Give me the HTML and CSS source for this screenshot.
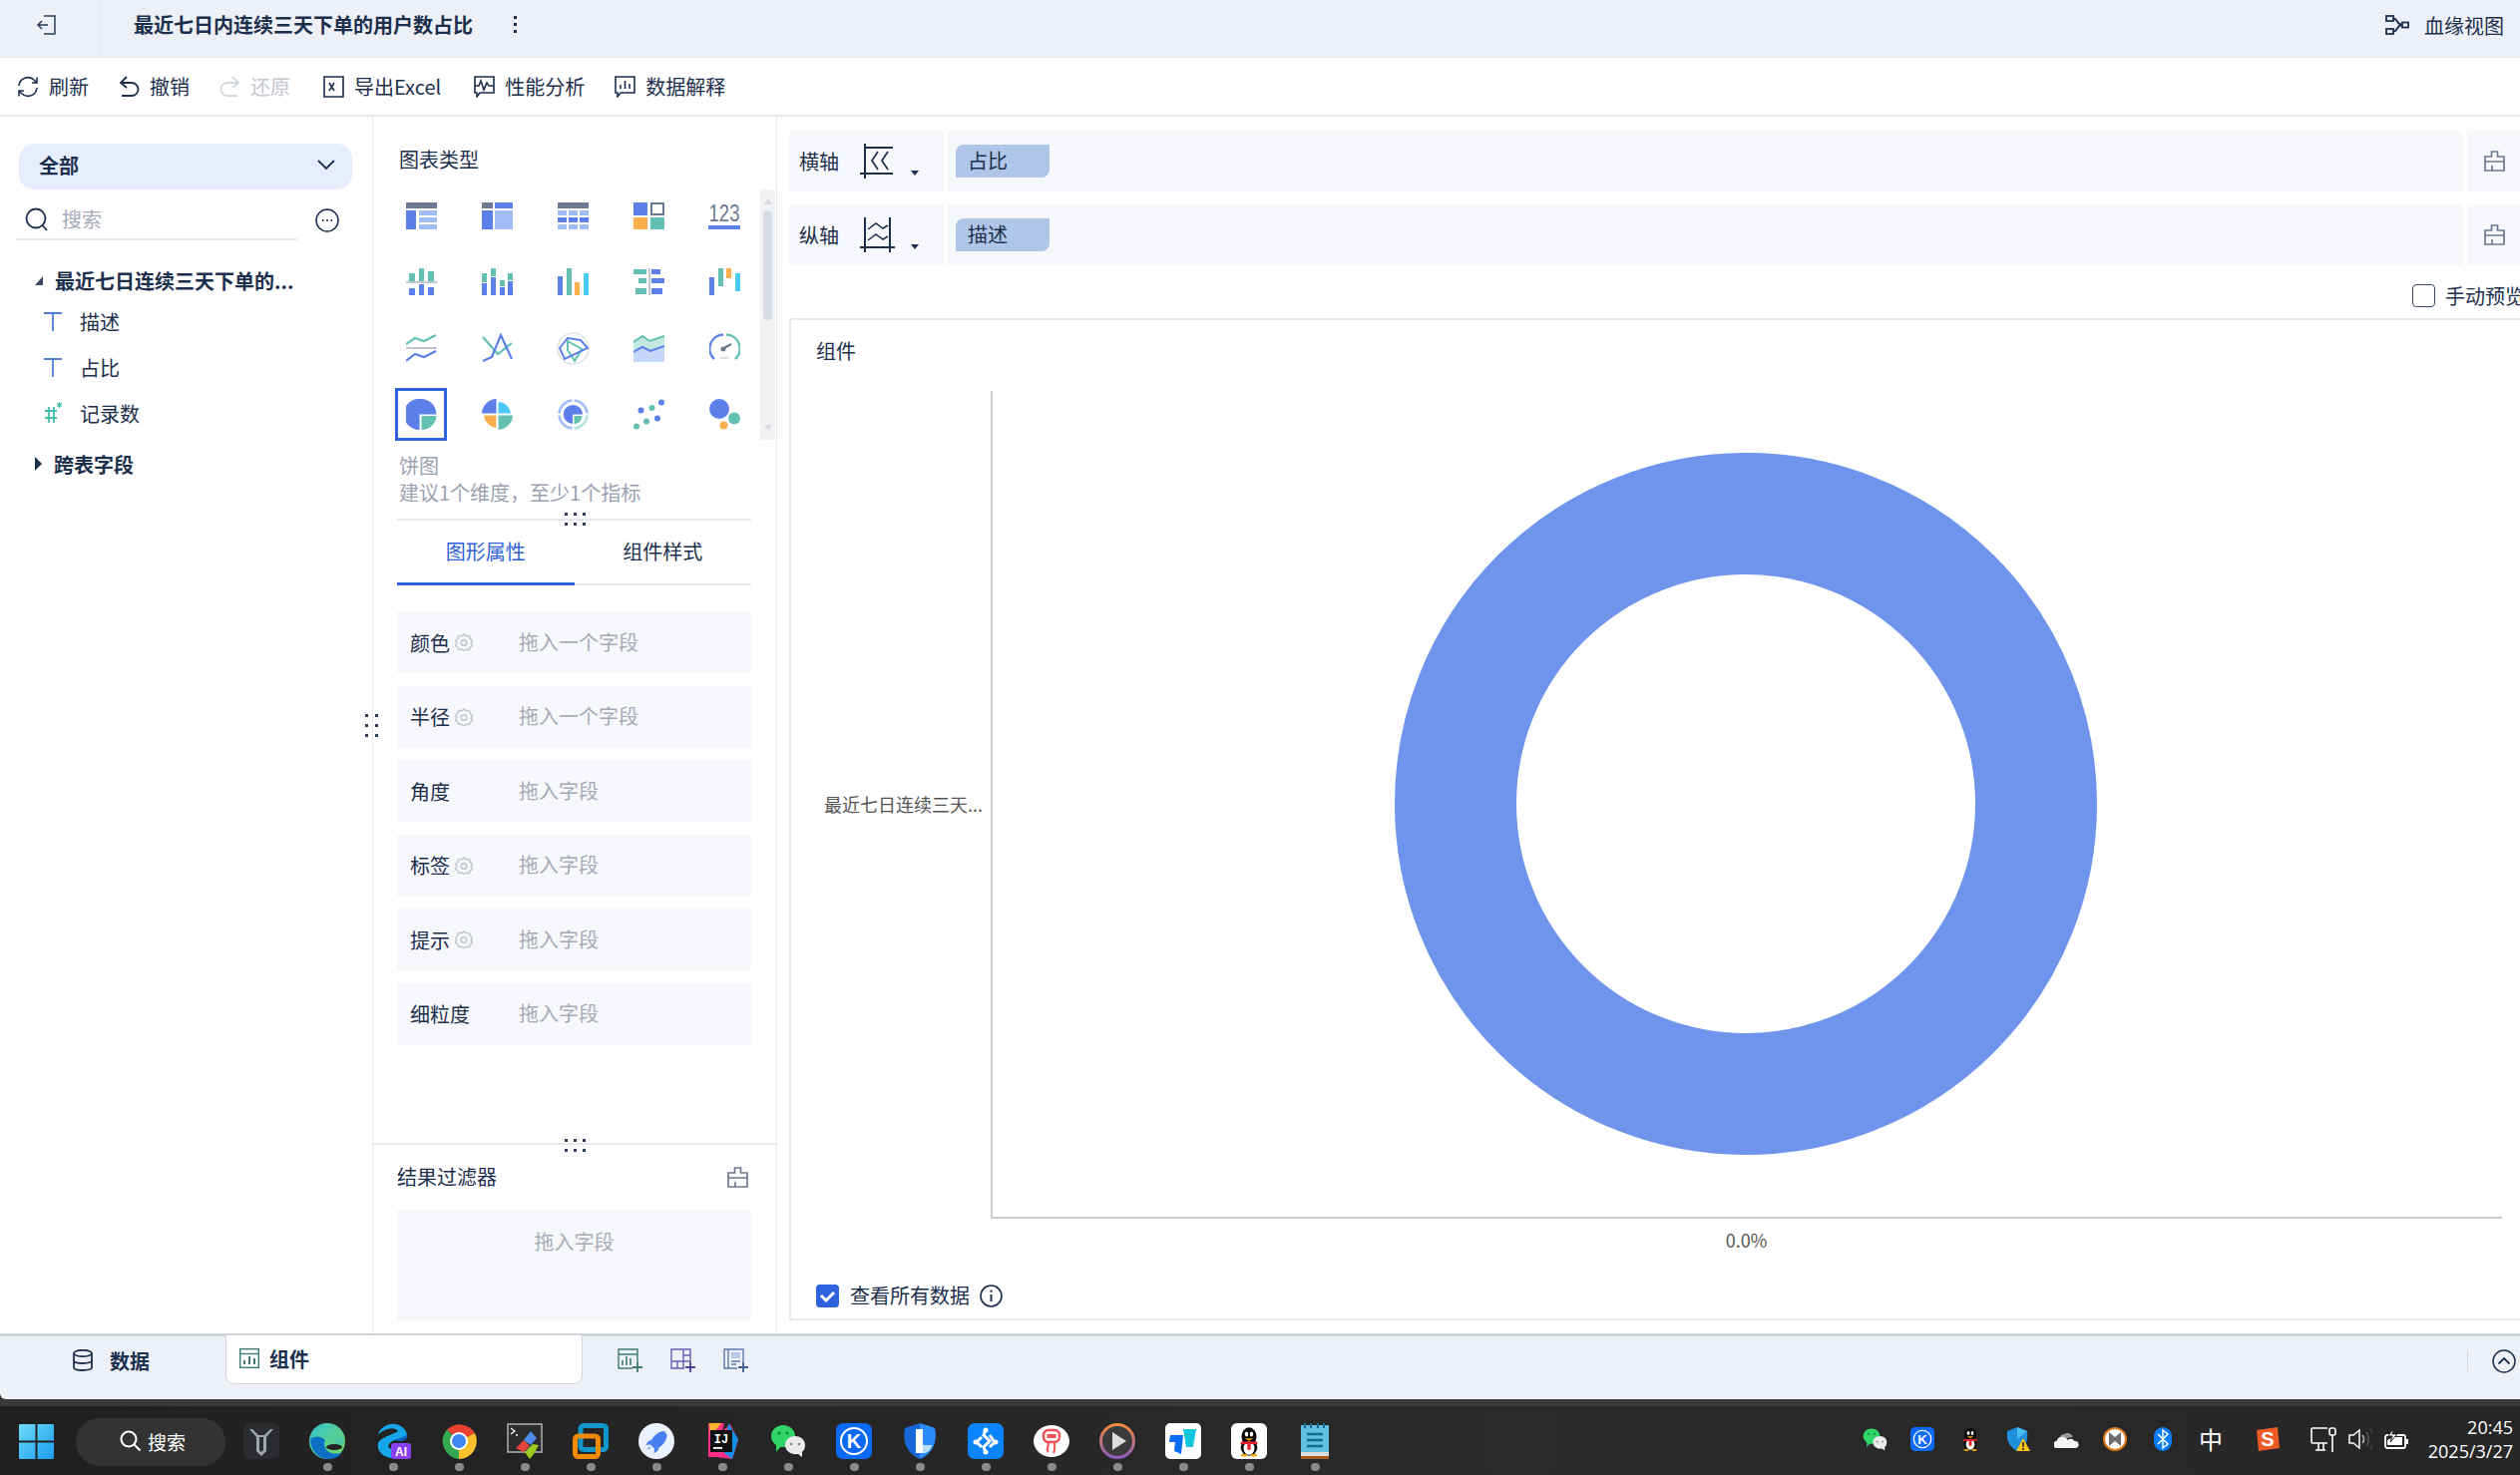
FILE: index.html
```html
<!DOCTYPE html>
<html lang="zh-CN">

<head>
    <meta charset="UTF-8">
    <title>最近七日内连续三天下单的用户数占比</title>
    <link rel="stylesheet" href="styles.css">
</head>

<body>

    <svg class="defs" aria-hidden="true">
        <defs>
            <symbol id="brush" viewBox="0 0 21 21">
                <path d="M7.5 6V1h6v5h6.5v14H1V6zM1 11h19M8 20v-5" fill="none" stroke="#6c7a90" stroke-width="1.7"/>
            </symbol>
            <symbol id="gear" viewBox="0 0 18 18">
                <path d="M9 1l2.500 1.800 3-.2.900 2.900 2.100 2.100-1.300 2.400 1.300 2.400-2.100 1.600-.9 2.400-3-.2L9 17.800l-2.500-1.800-3 .2-.9-2.400-2.100-1.600 1.300-2.400L.5 7.600l2.100-2.100.9-2.900 3 .2z" fill="none" stroke="#c3c9d4" stroke-width="1.600"/>
                <circle cx="9" cy="9.400" r="2.800" fill="none" stroke="#c3c9d4" stroke-width="1.600"/>
            </symbol>
            <symbol id="wechat" viewBox="0 0 36 36">
                <path d="M13 2c7 0 12 5 12 11s-5 11-12 11l-3 0-4 5 0-7C3 20 1 17 1 13 1 7 6 2 13 2z" fill="#2fd667"/>
                <circle cx="9" cy="10" r="1.600" fill="#148a3f"/>
                <circle cx="17" cy="10" r="1.600" fill="#148a3f"/>
                <path d="M25 13c6 0 10 4 10 9 0 3-1 5-3 7l0 5-4-3c-7 1-13-3-13-9 0-5 4-9 10-9z" fill="#eceaea"/>
                <circle cx="21" cy="21" r="1.300" fill="#888"/>
                <circle cx="29" cy="21" r="1.300" fill="#888"/>
            </symbol>
            <symbol id="kapp" viewBox="0 0 36 36">
                <rect width="36" height="36" rx="7" fill="#0a69f5"/>
                <circle cx="18" cy="18" r="13" fill="none" stroke="#fff" stroke-width="2"/>
                <text x="18" y="25" text-anchor="middle" class="icon-letter" font-size="20" fill="#fff">K</text>
            </symbol>
            <symbol id="penguin" viewBox="0 0 36 36">
                <ellipse cx="18" cy="12" rx="9" ry="11" fill="#0b0b0b"/>
                <ellipse cx="18" cy="25" rx="10" ry="10" fill="#0b0b0b"/>
                <ellipse cx="18" cy="26" rx="6.500" ry="8" fill="#fff"/>
                <ellipse cx="15" cy="9" rx="2" ry="3" fill="#fff"/>
                <ellipse cx="21" cy="9" rx="2" ry="3" fill="#fff"/>
                <path d="M13 14h10l-5 3z" fill="#f5a800"/>
                <path d="M8 18h20v3H20v7h-4v-7H8z" fill="#e3222a"/>
                <ellipse cx="12" cy="34.500" rx="4" ry="1.500" fill="#f5a800"/>
                <ellipse cx="24" cy="34.500" rx="4" ry="1.500" fill="#f5a800"/>
            </symbol>
        </defs>
    </svg>

    <!-- title bar -->
    <header class="topbar">
        <div class="back-btn">
            <svg width="20" height="20" viewBox="0 0 20 20" fill="none" stroke="#2b3d58" stroke-width="1.500">
                <path d="M7 1h11v18H7M1 10h10M5 6l-4 4 4 4"/>
            </svg>
        </div>
        <div class="page-title">最近七日内连续三天下单的用户数占比</div>
        <div class="kebab"><i></i><i></i><i></i></div>
        <div class="lineage">
            <svg width="24" height="20" viewBox="0 0 24 20" fill="none" stroke="#1c2f4d" stroke-width="1.800">
                <rect x="1" y="1" width="7" height="5"/>
                <rect x="1" y="14" width="7" height="5"/>
                <rect x="17" y="7.500" width="6" height="5"/>
                <path d="M8 3.500c5 0 3 6.500 9 6.500M8 16.500c5 0 3-6.500 9-6.500"/>
            </svg>
            <span>血缘视图</span>
        </div>
    </header>

    <!-- tool buttons -->
    <nav class="toolbar">
        <div class="tool tool-refresh">
            <svg width="22" height="22" viewBox="0 0 22 22" fill="none" stroke="#1c2f4d" stroke-width="1.600">
                <path d="M2 10a9 9 0 0 1 15.500-5.500L20 7M20 1.500V7h-5M20 12a9 9 0 0 1-15.500 5.500L2 15M2 20.500V15h5"/>
            </svg>
            <span>刷新</span>
        </div>
        <div class="tool tool-undo">
            <svg width="21" height="22" viewBox="0 0 21 22" fill="none" stroke="#1c2f4d" stroke-width="1.800">
                <path d="M8 1L2 7l6 5M2 7h11a6.500 6.500 0 0 1 0 13H3"/>
            </svg>
            <span>撤销</span>
        </div>
        <div class="tool tool-redo is-off">
            <svg width="21" height="22" viewBox="0 0 21 22" fill="none" stroke="#d4d8df" stroke-width="1.800">
                <path d="M13 1l6 6-6 5M19 7H8a6.500 6.500 0 0 0 0 13h10"/>
            </svg>
            <span>还原</span>
        </div>
        <div class="tool tool-excel">
            <svg width="21" height="22" viewBox="0 0 21 22" fill="none" stroke="#1c2f4d" stroke-width="1.600">
                <path d="M15 1H1v20h14M15 1h5v20h-5"/>
                <path d="M6 7l5 8M11 7l-5 8"/>
            </svg>
            <span>导出Excel</span>
        </div>
        <div class="tool tool-perf">
            <svg width="21" height="22" viewBox="0 0 21 22" fill="none" stroke="#1c2f4d" stroke-width="1.600">
                <path d="M1 1h19v16H6l-3 4v-4H1z"/>
                <path d="M1 10h4l2-5 3 9 3-7 2 3h5"/>
            </svg>
            <span>性能分析</span>
        </div>
        <div class="tool tool-explain">
            <svg width="21" height="22" viewBox="0 0 21 22" fill="none" stroke="#1c2f4d" stroke-width="1.600">
                <path d="M1 1h19v16H6l-3 4v-4H1z"/>
                <path d="M6 9v4M10.500 5v8M15 8v5"/>
            </svg>
            <span>数据解释</span>
        </div>
    </nav>

    <main class="main">

        <!-- data fields -->
        <aside class="data-panel">
            <div class="scope-select">
                <span>全部</span>
                <svg width="18" height="11" viewBox="0 0 18 11" fill="none" stroke="#1c2f4d" stroke-width="1.800">
                    <path d="M1 1l8 8 8-8"/>
                </svg>
            </div>
            <div class="search-row">
                <div class="search-box">
                    <svg width="24" height="24" viewBox="0 0 24 24" fill="none" stroke="#1c2f4d" stroke-width="1.800">
                        <circle cx="11" cy="11" r="9.500"/>
                        <path d="M17.500 18l4.500 5"/>
                    </svg>
                    <span>搜索</span>
                </div>
                <svg width="24" height="24" viewBox="0 0 24 24" fill="none" stroke="#1c2f4d" stroke-width="1.500">
                    <circle cx="12" cy="12" r="11"/>
                    <path d="M7 12h1.500M11.300 12h1.500M15.500 12h1.500" stroke-width="2"/>
                </svg>
            </div>
            <div class="tree">
                <div class="tree-group">
                    <i class="caret-open"></i>
                    <span>最近七日连续三天下单的...</span>
                </div>
                <div class="tree-field first">
                    <svg width="18" height="20" viewBox="0 0 18 20" fill="none" stroke="#4d7fd6" stroke-width="1.800"><path d="M0 2h18M9 2v18"/></svg>
                    <span>描述</span>
                </div>
                <div class="tree-field">
                    <svg width="18" height="20" viewBox="0 0 18 20" fill="none" stroke="#4d7fd6" stroke-width="1.800"><path d="M0 2h18M9 2v18"/></svg>
                    <span>占比</span>
                </div>
                <div class="tree-field">
                    <svg width="18" height="22" viewBox="0 0 18 22" fill="none" stroke="#47bfae" stroke-width="1.800"><path d="M1 9h12M1 16h12M5 5v16M10 5v16"/><path d="M15.500 0v6M13 1.500l5 3M18 1.500l-5 3" stroke-width="1.200"/></svg>
                    <span>记录数</span>
                </div>
                <div class="tree-group second">
                    <i class="caret-closed"></i>
                    <span>跨表字段</span>
                </div>
            </div>
        </aside>

        <!-- chart settings -->
        <section class="setting-panel">
            <div class="type-block">
                <div class="block-title">图表类型</div>
                <div class="type-wrap">
                    <div class="type-grid">
                        <div class="type-cell"><svg width="31" height="28" viewBox="0 0 31 28"><rect width="31" height="6" fill="#6b7a90"/><rect y="8" width="10" height="19" fill="#5b80ea"/><rect x="13" y="8" width="18" height="5" fill="#a0bdf5"/><rect x="13" y="15" width="18" height="5" fill="#a0bdf5"/><rect x="13" y="22" width="18" height="5" fill="#a0bdf5"/></svg></div>
                        <div class="type-cell"><svg width="31" height="28" viewBox="0 0 31 28"><rect width="11" height="6" fill="#6b7a90"/><rect x="13" width="18" height="6" fill="#5b80ea"/><rect y="8" width="11" height="19" fill="#5b80ea"/><rect x="13" y="8" width="18" height="19" fill="#a0bdf5"/></svg></div>
                        <div class="type-cell"><svg width="31" height="28" viewBox="0 0 31 28"><rect width="31" height="6" fill="#6b7a90"/><path d="M0 8h9v5H0zM11 8h9v5h-9zM22 8h9v5h-9zM0 22h9v5H0zM11 22h9v5h-9zM22 22h9v5h-9z" fill="#a0bdf5"/><path d="M0 15h9v5H0zM11 15h9v5h-9zM22 15h9v5h-9z" fill="#5b80ea"/></svg></div>
                        <div class="type-cell"><svg width="31" height="28" viewBox="0 0 31 28"><rect width="14" height="13" fill="#5b80ea"/><rect x="18" y="1" width="12" height="11" fill="none" stroke="#6b7a90" stroke-width="2"/><rect y="15" width="14" height="12" fill="#fbb04d"/><rect x="17" y="15" width="14" height="12" fill="#64c0b3"/></svg></div>
                        <div class="type-cell"><svg class="num-icon" width="32" height="28" viewBox="0 0 32 28"><g transform="scale(1 1.25)"><text x="16" y="15" text-anchor="middle" class="icon-num">123</text></g><rect y="23" width="32" height="4" fill="#5b80ea"/></svg></div>

                        <div class="type-cell"><svg width="31" height="28" viewBox="0 0 31 28"><path d="M3 5h6v8H3zM13 0h5v13h-5zM22 3h6v10h-6z" fill="#64c0b3"/><rect y="13" width="31" height="2" fill="#c3c9d4"/><path d="M3 20h6v7H3zM13 16h5v11h-5zM22 19h6v8h-6z" fill="#5b80ea"/></svg></div>
                        <div class="type-cell"><svg width="31" height="28" viewBox="0 0 31 28"><path d="M0 5h5v9H0zM9 0h5v8H9zM18 12h5v6h-5zM26 5h5v7h-5z" fill="#64c0b3"/><path d="M0 15h5v12H0zM9 9h5v18H9zM18 19h5v8h-5zM26 13h5v14h-5z" fill="#5b80ea"/></svg></div>
                        <div class="type-cell"><svg width="31" height="28" viewBox="0 0 31 28"><rect y="8" width="5" height="19" fill="#5b80ea"/><rect x="9" width="5" height="27" fill="#64c0b3"/><rect x="17" y="14" width="5" height="13" fill="#fbb04d"/><rect x="26" y="5" width="5" height="22" fill="#4cc9f7"/></svg></div>
                        <div class="type-cell"><svg width="31" height="28" viewBox="0 0 31 28"><path d="M0 1h13v5H0zM5 10h8v5H5zM2 20h11v6H2z" fill="#64c0b3"/><rect x="15" width="2" height="27" fill="#c3c9d4"/><path d="M18 1h9v5h-9zM18 10h13v5H18zM18 20h11v6H18z" fill="#5b80ea"/></svg></div>
                        <div class="type-cell"><svg width="31" height="28" viewBox="0 0 31 28"><rect y="9" width="5" height="18" fill="#5b80ea"/><rect x="9" width="5" height="18" fill="#64c0b3"/><rect x="17" width="5" height="10" fill="#fbb04d"/><rect x="26" y="5" width="5" height="18" fill="#4cc9f7"/></svg></div>

                        <div class="type-cell"><svg width="31" height="28" viewBox="0 0 31 28" fill="none" stroke-width="2.200"><path d="M0 10l9-6 9 3 12-6" stroke="#64c0b3"/><rect y="13" width="31" height="2" fill="#c3c9d4" stroke="none"/><path d="M0 27l9-7 9 3 12-6" stroke="#5b80ea"/></svg></div>
                        <div class="type-cell"><svg width="31" height="30" viewBox="0 0 31 30" fill="none" stroke-width="2.200"><path d="M1 4l15 17 14-11" stroke="#64c0b3"/><path d="M1 28l9-4 9-22 11 24" stroke="#5b80ea"/></svg></div>
                        <div class="type-cell"><svg width="33" height="33" viewBox="0 0 33 33" fill="none"><circle cx="16.500" cy="16.500" r="15.500" stroke="#dde1e8" stroke-width="1.500"/><path d="M11 9l14 8-7 12-7-11z" stroke="#64c0b3" stroke-width="2"/><path d="M3 16l8-10 13 2 7 8-23 11z" stroke="#5b80ea" stroke-width="2"/></svg></div>
                        <div class="type-cell"><svg width="31" height="28" viewBox="0 0 31 28"><path d="M0 8l9-6 7 5 15-5v22H0z" fill="#c4e8e2"/><path d="M0 18l9-5 8 4 14-5v16H0z" fill="#c6d6f8"/><path d="M0 8l9-6 7 5 15-5" fill="none" stroke="#64c0b3" stroke-width="2"/><path d="M0 18l9-5 8 4 14-5" fill="none" stroke="#5b80ea" stroke-width="2"/></svg></div>
                        <div class="type-cell"><svg width="31" height="31" viewBox="0 0 31 31" fill="none" stroke-width="2.500"><path d="M5 26A14 14 0 0 1 14 1.600" stroke="#5b80ea"/><path d="M17 1.600A14 14 0 0 1 26 26" stroke="#64c0b3"/><path d="M11 25h9" stroke="#dde1e8"/><path d="M13 16l9-5" stroke="#6b7a90"/><circle cx="14" cy="16" r="2.500" fill="#6b7a90" stroke="none"/></svg></div>

                        <div class="type-cell is-active"><svg width="31" height="31" viewBox="0 0 31 31"><path d="M15.500 0A15.500 15.500 0 1 0 14 30.900V15.500h16.900A15.500 15.500 0 0 0 15.500 0z" fill="#5b80ea"/><path d="M16 17h15A15 15 0 0 1 16 31z" fill="#64c0b3"/></svg></div>
                        <div class="type-cell"><svg width="31" height="31" viewBox="0 0 31 31"><path d="M14.500 0A15 15 0 0 0 0 14.500h14.500z" fill="#5b80ea"/><path d="M16.500 3A13 13 0 0 1 29 14.500H16.500z" fill="#4cc9f7"/><path d="M14.500 16.500H2A14 14 0 0 0 14.500 29z" fill="#fbb04d"/><path d="M16.500 16.500H31A15 15 0 0 1 16.500 31z" fill="#64c0b3"/></svg></div>
                        <div class="type-cell"><svg width="31" height="31" viewBox="0 0 31 31" fill="none"><path d="M14.500 1.500A14 14 0 0 0 1.500 14.500M1.500 16.500A14 14 0 0 0 14.500 29.500" stroke="#a0bdf5" stroke-width="2.500"/><path d="M16.500 1.500A14 14 0 0 1 29.500 14.500" stroke="#a0bdf5" stroke-width="2.500"/><path d="M16.500 29.500A14 14 0 0 0 29.500 16.500" stroke="#b8e3dc" stroke-width="2.500"/><path d="M15.500 6A9.500 9.500 0 1 0 15 25V15.500h10A9.500 9.500 0 0 0 15.500 6z" fill="#5b80ea"/><path d="M16.500 17h8A8 8 0 0 1 16.500 25z" fill="#64c0b3"/></svg></div>
                        <div class="type-cell"><svg width="31" height="31" viewBox="0 0 31 31"><circle cx="7.500" cy="11.500" r="3" fill="#5b80ea"/><circle cx="18.500" cy="9" r="3" fill="#64c0b3"/><circle cx="28" cy="3.500" r="3" fill="#5b80ea"/><circle cx="3" cy="27.500" r="3" fill="#64c0b3"/><circle cx="13" cy="22.500" r="3" fill="#64c0b3"/><circle cx="24" cy="19.500" r="3" fill="#5b80ea"/></svg></div>
                        <div class="type-cell"><svg width="31" height="31" viewBox="0 0 31 31"><circle cx="10" cy="10" r="10" fill="#5b80ea"/><circle cx="25" cy="19.500" r="6" fill="#64c0b3"/><circle cx="14.500" cy="26.500" r="4" fill="#fbb04d"/></svg></div>
                    </div>
                    <div class="scroll-track">
                        <i class="arrow-up"></i>
                        <div class="scroll-thumb"></div>
                        <i class="arrow-down"></i>
                    </div>
                </div>
                <div class="type-hint">
                    <div>饼图</div>
                    <div>建议1个维度，至少1个指标</div>
                </div>
            </div>

            <div class="attr-block">
                <div class="grip-h"><i></i><i></i><i></i><i></i><i></i><i></i></div>
                <div class="tabs">
                    <div class="tab is-active">图形属性</div>
                    <div class="tab">组件样式</div>
                </div>
                <div class="attr-list">
                    <div class="attr-row">
                        <div class="attr-name">颜色<svg width="18" height="18"><use href="#gear"/></svg></div>
                        <div class="attr-drop">拖入一个字段</div>
                    </div>
                    <div class="attr-row">
                        <div class="attr-name">半径<svg width="18" height="18"><use href="#gear"/></svg></div>
                        <div class="attr-drop">拖入一个字段</div>
                    </div>
                    <div class="attr-row">
                        <div class="attr-name">角度</div>
                        <div class="attr-drop">拖入字段</div>
                    </div>
                    <div class="attr-row">
                        <div class="attr-name">标签<svg width="18" height="18"><use href="#gear"/></svg></div>
                        <div class="attr-drop">拖入字段</div>
                    </div>
                    <div class="attr-row">
                        <div class="attr-name">提示<svg width="18" height="18"><use href="#gear"/></svg></div>
                        <div class="attr-drop">拖入字段</div>
                    </div>
                    <div class="attr-row">
                        <div class="attr-name">细粒度</div>
                        <div class="attr-drop">拖入字段</div>
                    </div>
                </div>
            </div>

            <div class="filter-block">
                <div class="grip-h"><i></i><i></i><i></i><i></i><i></i><i></i></div>
                <div class="filter-head">
                    <span>结果过滤器</span>
                    <svg width="21" height="21"><use href="#brush"/></svg>
                </div>
                <div class="filter-drop">拖入字段</div>
            </div>
            <div class="grip-v"><i></i><i></i><i></i><i></i><i></i><i></i></div>
        </section>

        <!-- chart canvas -->
        <section class="chart-panel">
            <div class="axis-row">
                <div class="axis-label">
                    <span>横轴</span>
                    <svg width="35" height="35" viewBox="0 0 35 35" fill="none" stroke="#1c2f4d" stroke-width="2">
                        <path d="M0 30h33M5 0v35M5 4h28"/>
                        <path d="M18 8l-6 9 6 9M28 8l-6 9 6 9" stroke-width="1.700"/>
                    </svg>
                    <i class="caret-down"></i>
                </div>
                <div class="axis-drop"><div class="pill">占比</div></div>
                <div class="axis-end"><svg width="21" height="21"><use href="#brush"/></svg></div>
            </div>
            <div class="axis-row">
                <div class="axis-label">
                    <span>纵轴</span>
                    <svg width="35" height="35" viewBox="0 0 35 35" fill="none" stroke="#1c2f4d" stroke-width="2">
                        <path d="M0 30h35M5 0v35M30 0v35"/>
                        <path d="M8 12l8-6 7 5 5-3M8 23l8-6 7 5 5-3" stroke-width="1.500"/>
                    </svg>
                    <i class="caret-down"></i>
                </div>
                <div class="axis-drop"><div class="pill">描述</div></div>
                <div class="axis-end"><svg width="21" height="21"><use href="#brush"/></svg></div>
            </div>
            <div class="preview-row">
                <i class="check-empty"></i>
                <span>手动预览</span>
            </div>
            <div class="chart-card">
                <div class="card-title">组件</div>
                <div class="plot-row">
                    <div class="y-label">最近七日连续三天...</div>
                    <div class="plot">
                        <svg width="704" height="704" viewBox="0 0 704 704">
                            <circle cx="352" cy="352" r="291" fill="none" stroke="#6f94ec" stroke-width="122"/>
                        </svg>
                    </div>
                </div>
                <div class="x-label">0.0%</div>
                <div class="all-data">
                    <i class="check-on">
                        <svg width="23" height="23" viewBox="0 0 23 23" fill="none" stroke="#fff" stroke-width="3"><path d="M5 11l5 5 8-8"/></svg>
                    </i>
                    <span>查看所有数据</span>
                    <svg width="23" height="23" viewBox="0 0 23 23" fill="none" stroke="#1c2f4d" stroke-width="1.600">
                        <circle cx="11.500" cy="11.500" r="10.500"/>
                        <path d="M11.500 10v7" stroke-width="2"/>
                        <path d="M11.500 5.500v2.200" stroke-width="2"/>
                    </svg>
                </div>
            </div>
        </section>
    </main>

    <!-- sheet tabs -->
    <div class="sheetbar">
        <div class="sheet-data">
            <svg width="20" height="22" viewBox="0 0 20 22" fill="none" stroke="#1c2f4d" stroke-width="1.800">
                <ellipse cx="10" cy="4" rx="9" ry="3.200"/>
                <path d="M1 4v14c0 2 4 3 9 3s9-1 9-3V4M1 11c0 2 4 3 9 3s9-1 9-3"/>
            </svg>
            <span>数据</span>
        </div>
        <div class="sheet-tab">
            <svg width="20" height="20" viewBox="0 0 20 20" fill="none" stroke="#3e7a78" stroke-width="1.400">
                <rect x=".7" y=".7" width="18.600" height="18.600"/>
                <path d="M1 5.500h18"/>
                <path d="M5 16v-4M10 16V8M15 16v-6" stroke-width="2"/>
            </svg>
            <span>组件</span>
        </div>
        <div class="sheet-add">
            <svg width="25" height="25" viewBox="0 0 25 25" fill="none" stroke="#3e7a78" stroke-width="1.400">
                <path d="M15 20H1V1h19v14M1 6h19"/>
                <path d="M5 17v-5M9 17V8M13 17v-7" stroke-width="1.600"/>
                <path d="M20 14v10M15 19h10" stroke-width="1.800"/>
            </svg>
            <svg width="25" height="25" viewBox="0 0 25 25" fill="none" stroke="#6a5cb0" stroke-width="1.400">
                <path d="M14 20H1V1h19v13M13 1v19M13 7h7M13 13h7M1 13h12M7 13v7"/>
                <path d="M20 14v10M15 19h10" stroke="#4a3f9c" stroke-width="1.800"/>
            </svg>
            <svg width="25" height="25" viewBox="0 0 25 25" fill="none" stroke="#5d7ab0" stroke-width="1.400">
                <path d="M14 20H1V1h19v13M5 1v19"/>
                <rect x="8" y="4" width="9" height="6" fill="#b7c8e8" stroke="none"/>
                <path d="M8 13h9M8 16h5"/>
                <path d="M20 14v10M15 19h10" stroke="#3f5f9c" stroke-width="1.800"/>
            </svg>
        </div>
        <div class="sheet-end">
            <i class="sheet-sep"></i>
            <svg width="24" height="24" viewBox="0 0 24 24" fill="none" stroke="#1c2f4d" stroke-width="1.500">
                <circle cx="12" cy="12" r="11"/>
                <path d="M6.500 14.500L12 9l5.500 5.500" stroke-width="1.800"/>
            </svg>
        </div>
    </div>

    <!-- windows taskbar -->
    <footer class="taskbar">
        <svg class="win-logo" width="35" height="35" viewBox="0 0 35 35">
            <defs>
                <linearGradient id="winblue" x1="0" y1="0" x2="1" y2="1">
                    <stop offset="0" stop-color="#6fdcf7"/>
                    <stop offset="1" stop-color="#1a9bf0"/>
                </linearGradient>
            </defs>
            <path d="M1 0h15.500v16.500H0V1zM18.500 0H34l1 1v15.500H18.500zM0 18.500h16.500V35H1l-1-1zM18.500 18.500H35V34l-1 1H18.500z" fill="url(#winblue)"/>
        </svg>
        <div class="win-search">
            <svg width="22" height="22" viewBox="0 0 22 22" fill="none" stroke="#fff" stroke-width="2">
                <circle cx="9" cy="9" r="7.500"/>
                <path d="M14.500 14.500l6 6"/>
            </svg>
            <span>搜索</span>
        </div>
        <div class="apps">
            <div class="app no-dot">
                <svg width="36" height="36" viewBox="0 0 36 36"><rect width="36" height="36" rx="7" fill="#2a2c30"/><path d="M6 6l7 8v14l5 5 5-5V14l7-8-3 0-6 6h-6L9 6z" fill="#a2a6aa"/><path d="M16 14h4v13l-2 2-2-2z" fill="#2a2c2f"/></svg>
            </div>
            <div class="app">
                <svg width="36" height="36" viewBox="0 0 36 36"><defs><linearGradient id="edgeg" x1="0" y1="0" x2="1" y2="1"><stop offset="0" stop-color="#2fc2d5"/><stop offset="1" stop-color="#7ed95a"/></linearGradient></defs><circle cx="18" cy="18" r="18" fill="url(#edgeg)"/><path d="M1 17C2 28 9 36 19 36c6 0 11-2 14-7-4 2-9 2-13 0-5-3-6-8-4-12-4-4-11-5-15 0z" fill="#0c6fc4"/><path d="M16 17c2-3 7-3 9 0 1 2 1 4 0 5h9c1-3 1-6 0-8H17z" fill="#4fc9a4"/><ellipse cx="25" cy="24" rx="8" ry="3" fill="#242424"/></svg>
            </div>
            <div class="app">
                <svg width="36" height="36" viewBox="0 0 36 36"><path d="M3 12C5 4 13 0 20 1c7 1 12 6 12 12l-12 4C14 19 12 23 14 25l6 3v7C9 36 1 28 3 20c1-3 6-6 14-9 5-2 7-3 5-4C17 4 8 6 3 12z" fill="#16a7ea"/><path d="M20 17l12-5c1 4-5 8-12 5z" fill="#0b63c8"/><rect x="16" y="20" width="20" height="16" rx="3" fill="#8a3ff0"/><text x="26" y="33" text-anchor="middle" class="icon-letter" font-size="12" fill="#fff">AI</text></svg>
            </div>
            <div class="app">
                <svg width="36" height="36" viewBox="0 0 36 36"><path d="M18 18L6 6.500A18 18 0 0 1 34 10z" fill="#e8412f"/><path d="M18 18L34 10A18 18 0 0 1 18 36z" fill="#fbc02d"/><path d="M18 18L18 36A18 18 0 0 1 6 6.500z" fill="#35a853"/><circle cx="18" cy="18" r="9" fill="#fff"/><circle cx="18" cy="18" r="7" fill="#3f86f0"/></svg>
            </div>
            <div class="app">
                <svg width="36" height="36" viewBox="0 0 36 36"><rect x="1" y="1" width="34" height="28" fill="#2b2b2b" stroke="#a9a9a9" stroke-width="1.600"/><path d="M4 5l4 3-4 3M9 12h2" fill="none" stroke="#fff" stroke-width="1.300"/><path d="M9 25l8-8 6 6-6 6z" fill="#e2453a"/><path d="M17 17l7-9 6 7-6 7z" fill="#4d8ae6"/><path d="M18 29l8-8 6 1-5 9-4 5z" fill="#9ccc20"/></svg>
            </div>
            <div class="app">
                <svg width="36" height="36" viewBox="0 0 36 36" fill="none" stroke-width="5"><rect x="8" y="2.500" width="25.500" height="24" rx="3" stroke="#0f95c9"/><rect x="2.500" y="13" width="23" height="20.500" rx="3" stroke="#f08a00"/></svg>
            </div>
            <div class="app">
                <svg width="36" height="36" viewBox="0 0 36 36"><circle cx="18" cy="18" r="18" fill="#ecf2fd"/><path d="M26 8c-6 0-10 4-13 9l-3 1-3 4 5-.5 4 4-.5 5 4-3 1-3c5-3 8-8 8-13z" fill="#4a7ff2"/><path d="M8 27l3-4 2 2z" fill="#8fb2f8"/></svg>
            </div>
            <div class="app">
                <svg width="36" height="36" viewBox="0 0 36 36"><path d="M4 0h16l-2 8 8-7 8 16-6 19-16-2H4z" fill="#fb2f86"/><path d="M24 0l10 16-6 20-8-6z" fill="#0f8fe6"/><path d="M5 0h12L6 14z" fill="#fcb52e"/><rect x="6" y="7" width="22" height="22" fill="#111"/><text x="17" y="20" text-anchor="middle" class="icon-mono" font-size="12" fill="#fff">IJ</text><rect x="9" y="24" width="9" height="1.800" fill="#fff"/></svg>
            </div>
            <div class="app"><svg width="36" height="36"><use href="#wechat"/></svg></div>
            <div class="app"><svg width="36" height="36"><use href="#kapp"/></svg></div>
            <div class="app">
                <svg width="36" height="36" viewBox="0 0 36 36"><path d="M18 0l15 5c2 12 0 24-15 31C3 29 1 17 3 5z" fill="#1767d8"/><path d="M18 0l15 5c2 12 0 24-15 31z" fill="#2c8dfa"/><path d="M14 6h7v16h9c-1 5-5 8-9 8h-7z" fill="#fff"/><path d="M21 22h9c-1 5-5 8-9 8z" fill="#b9dcff"/></svg>
            </div>
            <div class="app">
                <svg width="36" height="36" viewBox="0 0 36 36"><rect width="36" height="36" rx="7" fill="#0a84ff"/><g fill="none" stroke="#fff" stroke-width="3"><path d="M18 6l-2 6 6 6-6 6 2 6M14 14l-5 5 5 5M22 12l5 7-5 5"/></g><circle cx="18" cy="7" r="2.500" fill="#fff"/><circle cx="18" cy="29" r="2.500" fill="#fff"/><circle cx="8" cy="19" r="2.500" fill="#fff"/><circle cx="28" cy="19" r="2.500" fill="#fff"/></svg>
            </div>
            <div class="app">
                <svg width="36" height="36" viewBox="0 0 36 36"><ellipse cx="18" cy="18" rx="18" ry="16" fill="#fff"/><rect x="10" y="7" width="16" height="12" rx="5" fill="none" stroke="#ef4f55" stroke-width="2.500"/><rect x="13.500" y="11" width="9" height="4" fill="#ef4f55"/><path d="M15 19c0 6-3 8 0 10M21 19c0 5 1 7-1 11" fill="none" stroke="#ef4f55" stroke-width="2"/></svg>
            </div>
            <div class="app">
                <svg width="36" height="36" viewBox="0 0 36 36"><defs><linearGradient id="playg" x1="0" y1="0" x2="0" y2="1"><stop offset="0" stop-color="#f08a3c"/><stop offset="1" stop-color="#8f5fc0"/></linearGradient></defs><circle cx="18" cy="18" r="16.500" fill="#3a3a3a" stroke="url(#playg)" stroke-width="3"/><path d="M13 9l14 9-14 9z" fill="#dcdcdc"/></svg>
            </div>
            <div class="app">
                <svg width="36" height="36" viewBox="0 0 36 36"><rect width="36" height="36" rx="5" fill="#fff"/><path d="M18 6h13l-3 18h-7z" fill="#0fc6dc"/><path d="M5 12h13l-2 19-7-3 1-9H4z" fill="#0a6cf0"/></svg>
            </div>
            <div class="app">
                <svg width="36" height="36" viewBox="0 0 36 36"><rect width="36" height="36" rx="6" fill="#fff"/><use href="#penguin" x="3" y="2" width="30" height="33"/></svg>
            </div>
            <div class="app">
                <svg width="28" height="36" viewBox="0 0 28 36"><rect y="2" width="28" height="34" rx="1" fill="#5fc0e0"/><rect y="29" width="28" height="4" fill="#dcdcdc"/><rect y="33" width="28" height="3" fill="#a85a1e"/><path d="M4 0v5M10 0v5M17 0v5M23 0v5" stroke="#1a6a8e" stroke-width="2"/><path d="M6 11h16M6 17h16M6 23h16" stroke="#0f6a90" stroke-width="2.500"/></svg>
            </div>
        </div>

        <div class="tray">
            <div class="tray-icon"><svg width="25" height="25"><use href="#wechat"/></svg></div>
            <div class="tray-icon"><svg width="24" height="24"><use href="#kapp"/></svg></div>
            <div class="tray-icon"><svg width="24" height="24"><use href="#penguin"/></svg></div>
            <div class="tray-icon">
                <svg width="24" height="24" viewBox="0 0 24 24"><path d="M11 0l10 4c1 8 0 15-10 20C2 19 0 12 1 4z" fill="#1f8fdc"/><path d="M11 0l10 4-10 8z" fill="#49c1f0"/><path d="M17 11l7 13H10z" fill="#fcc419"/><path d="M17 15v5M17 21v2" stroke="#222" stroke-width="1.500"/></svg>
            </div>
            <div class="tray-icon">
                <svg width="25" height="18" viewBox="0 0 25 18"><path d="M6 12a5 5 0 0 1 4-8 6 6 0 0 1 9 3c-4 0-9 2-13 5z" fill="#9a9a9a"/><path d="M3 18a3.500 3.500 0 0 1-.5-7 6 6 0 0 1 11-1 4.500 4.500 0 0 1 7 1 3.500 3.500 0 0 1 1 7z" fill="#f5f5f5"/></svg>
            </div>
            <div class="tray-icon">
                <svg width="24" height="24" viewBox="0 0 24 24"><circle cx="12" cy="12" r="11" fill="#fff" stroke="#e07b1a" stroke-width="2"/><path d="M6 5l6 5 6-5v14l-6-5-6 5z" fill="#6f6f6f"/></svg>
            </div>
            <div class="tray-icon">
                <svg width="18" height="24" viewBox="0 0 18 24"><rect width="18" height="24" rx="9" fill="#0a7cf5"/><path d="M4 7l10 10-5 4V3l5 4L4 17" fill="none" stroke="#fff" stroke-width="1.500"/></svg>
            </div>
            <div class="tray-icon tray-text">中</div>
            <div class="tray-icon sogou">
                <svg width="24" height="24" viewBox="0 0 24 24"><path d="M1 3l21-3 2 21-21 3z" fill="#ee5a24"/><text x="12" y="19" text-anchor="middle" class="icon-letter" font-size="20" fill="#fff">S</text></svg>
            </div>
            <div class="sys-icons">
                <svg width="26" height="25" viewBox="0 0 26 25" fill="none" stroke="#fff" stroke-width="1.600"><path d="M17 16H2a1 1 0 0 1-1-1V2a1 1 0 0 1 1-1h15M8 16v7M13 16v7M5 23h10"/><rect x="19" y="1" width="6" height="7" rx="2"/><path d="M22 8v17"/></svg>
                <svg width="24" height="22" viewBox="0 0 24 22" fill="none" stroke="#fff" stroke-width="1.500"><path d="M1 7h4l6-5v18l-6-5H1z"/><path d="M14 7c2 2 2 6 0 8" stroke="#bbb"/><path d="M18 4c3 4 3 10 0 14" stroke="#555"/><path d="M22 1c4 6 4 14 0 20" stroke="#444"/></svg>
                <svg width="24" height="22" viewBox="0 0 24 22"><path d="M3 7h16a2 2 0 0 1 2 2v9a2 2 0 0 1-2 2H3a2 2 0 0 1-2-2V9a2 2 0 0 1 2-2z" fill="none" stroke="#fff" stroke-width="1.800"/><path d="M3 12l6-3h9v8H3z" fill="#fff"/><path d="M22 11h2v5h-2z" fill="#fff"/><path d="M9 0L4 8h4l-2 6 7-8H8z" fill="#fff" stroke="#202020"/></svg>
            </div>
            <div class="clock">
                <div>20:45</div>
                <div>2025/3/27</div>
            </div>
        </div>
    </footer>

</body>

</html>
```

FILE: styles.css
```css
* {
    box-sizing: border-box;
}

body {
    margin: 0;
    width: 100vw;
    height: 100vh;
    overflow: hidden;
    display: flex;
    flex-direction: column;
    background-color: #333;
    color: #1c2f4d;
    font-family: "Noto Sans CJK SC", "Liberation Sans", sans-serif;
    font-size: 20px;
}

i {
    display: block;
}

svg {
    display: block;
    flex-shrink: 0;
}

.defs {
    position: absolute;
    width: 0;
    height: 0;
}

.icon-letter {
    font-family: "Liberation Sans", sans-serif;
    font-weight: bold;
}

.icon-mono {
    font-family: "Liberation Mono", monospace;
    font-weight: bold;
}

.icon-num {
    font-family: "Liberation Sans", sans-serif;
    font-size: 18.500px;
    fill: #6b7a90;
}

.num-icon {
    overflow: visible;
}

/* title bar */
.topbar {
    height: 58px;
    flex-shrink: 0;
    display: flex;
    align-items: center;
    background-color: #edf0f6;
    border-bottom: 1px solid #e4e7ed;
}

.back-btn {
    width: 101px;
    height: 100%;
    padding: 0 0 8px 37px;
    display: flex;
    align-items: center;
    border-right: 1px solid #e4e7ed;
}

.page-title {
    margin-left: 33px;
    width: 340px;
    font-weight: bold;
    line-height: 30px;
    white-space: nowrap;
    margin-top: -7px;
}

.kebab {
    margin: -8px 0 0 41px;
    display: flex;
    flex-direction: column;
    gap: 4px;
}

.kebab i {
    width: 3px;
    height: 3px;
    background-color: #1c2f4d;
}

.lineage {
    margin-left: auto;
    margin-top: -7px;
    padding-right: 16px;
    display: flex;
    align-items: center;
    gap: 15px;
}

/* tool buttons */
.toolbar {
    height: 59px;
    flex-shrink: 0;
    display: flex;
    align-items: center;
    padding-left: 17px;
    background-color: #fff;
    border-bottom: 2px solid #e8eaf0;
}

.tool {
    display: flex;
    align-items: center;
    gap: 10px;
    margin-right: 30px;
    white-space: nowrap;
}

.tool-redo {
    margin-right: 33px;
}

.tool-excel {
    margin-right: 33px;
}

.is-off {
    color: #c4c8d0;
}

/* data fields */
.main {
    flex: 1;
    min-height: 0;
    display: flex;
    background-color: #fff;
}

.data-panel {
    width: 374px;
    flex-shrink: 0;
    padding: 27px 0 0 19px;
    border-right: 1px solid #e8eaf0;
}

.scope-select {
    width: 334px;
    height: 46px;
    padding: 0 17px 3px 20px;
    display: flex;
    align-items: center;
    justify-content: space-between;
    background-color: #e6eefd;
    border-radius: 15px;
    font-weight: bold;
}

.search-row {
    margin: 10px 0 0 -2px;
    display: flex;
    align-items: center;
    gap: 18px;
}

.search-box {
    width: 281px;
    height: 41px;
    padding: 0 0 0 8px;
    display: flex;
    align-items: center;
    gap: 13px;
    border-bottom: 2px solid #e3e5ea;
    color: #a5abb8;
}

.tree {
    margin-top: 20px;
}

.tree-group {
    height: 40px;
    padding-left: 16px;
    display: flex;
    align-items: center;
    gap: 12px;
    font-weight: bold;
    white-space: nowrap;
}

.tree-group.second {
    margin-top: 11px;
}

.caret-open {
    width: 0;
    height: 0;
    border-left: 8px solid transparent;
    border-bottom: 9px solid #3a4a62;
}

.caret-closed {
    width: 0;
    height: 0;
    border-top: 7px solid transparent;
    border-bottom: 7px solid transparent;
    border-left: 7px solid #1c2f4d;
}

.tree-field {
    height: 40px;
    margin-top: 6px;
    padding-left: 25px;
    display: flex;
    align-items: center;
    gap: 18px;
}

.tree-field.first {
    margin-top: 1px;
}

/* chart settings */
.setting-panel {
    position: relative;
    width: 405px;
    flex-shrink: 0;
    display: flex;
    flex-direction: column;
    border-right: 1px solid #e8eaf0;
}

.type-block {
    height: 403px;
    flex-shrink: 0;
}

.block-title {
    margin: 28px 0 0 26px;
    line-height: 30px;
}

.type-wrap {
    margin: 9px 0 0 10px;
    display: flex;
    align-items: flex-start;
}

.type-grid {
    width: 379px;
    display: grid;
    grid-template-columns: repeat(5, 76px);
    grid-auto-rows: 66px;
    margin-right: -1px;
}

.type-cell {
    display: flex;
    align-items: center;
    justify-content: center;
}

.type-cell.is-active svg {
    box-sizing: content-box;
    padding: 8px 7.500px;
    border: 3px solid #2f62dd;
}

.scroll-track {
    width: 15px;
    height: 251px;
    margin-top: 6px;
    padding: 9px 3px;
    display: flex;
    flex-direction: column;
    align-items: center;
    justify-content: space-between;
    background-color: #f1f2f4;
}

.scroll-thumb {
    width: 9px;
    height: 110px;
    margin-bottom: auto;
    margin-top: 6px;
    background-color: #d9dce4;
    border-radius: 5px;
}

.arrow-up {
    width: 0;
    height: 0;
    border-left: 4px solid transparent;
    border-right: 4px solid transparent;
    border-bottom: 6px solid #d9dce4;
}

.arrow-down {
    width: 0;
    height: 0;
    border-left: 4px solid transparent;
    border-right: 4px solid transparent;
    border-top: 6px solid #d9dce4;
}

.type-hint {
    margin: 5px 0 0 26px;
    line-height: 27px;
    color: #9aa2b1;
    white-space: nowrap;
}

.attr-block {
    position: relative;
    flex: 1;
    min-height: 0;
}

.attr-block::before {
    content: "";
    display: block;
    height: 2px;
    margin: 0 25px 0 24px;
    background-color: #e8eaf0;
}

.grip-h {
    position: absolute;
    left: 192px;
    top: -6px;
    width: 21px;
    display: grid;
    grid-template-columns: repeat(3, 3px);
    justify-content: space-between;
    row-gap: 7px;
}

.grip-h i,
.grip-v i {
    width: 3px;
    height: 3px;
    background-color: #2b3d58;
}

.grip-v {
    position: absolute;
    left: -8px;
    top: 599px;
    width: 13px;
    display: grid;
    grid-template-columns: repeat(2, 3px);
    justify-content: space-between;
    row-gap: 7px;
}

.tabs {
    margin: 0 25px 0 24px;
    height: 65px;
    display: flex;
}

.tab {
    flex: 1;
    padding-top: 16px;
    line-height: 30px;
    text-align: center;
    border-bottom: 2px solid #e8eaf0;
}

.tab.is-active {
    color: #2f62dd;
    border-bottom: 3px solid #2f62dd;
}

.attr-list {
    margin: 26px 25px 0 24px;
    display: grid;
    grid-auto-rows: 62px;
    row-gap: 12.600px;
}

.attr-row {
    display: flex;
    align-items: center;
    background-color: #f7f8fc;
}

.attr-name {
    width: 122px;
    padding-left: 13px;
    display: flex;
    align-items: center;
    gap: 5px;
}

.attr-drop {
    margin-top: -2px;
    color: #a5abb8;
}

.filter-block {
    position: relative;
    height: 191px;
    flex-shrink: 0;
    padding: 17px 25px 0 24px;
    border-top: 2px solid #e8eaf0;
}

.filter-head {
    display: flex;
    align-items: center;
    justify-content: space-between;
    padding-right: 3px;
    line-height: 30px;
}

.filter-drop {
    height: 111px;
    margin-top: 18px;
    padding-top: 18px;
    line-height: 28px;
    text-align: center;
    background-color: #f7f8fc;
    color: #a5abb8;
}

/* chart canvas */
.chart-panel {
    flex: 1;
    min-width: 0;
    padding: 14px 0 0 12px;
}

.axis-row {
    height: 61px;
    margin-bottom: 13px;
    display: flex;
    gap: 3px;
}

.axis-label {
    width: 156px;
    padding-left: 10px;
    display: flex;
    align-items: center;
    gap: 21px;
    background-color: #f7f8fc;
}

.caret-down {
    width: 0;
    height: 0;
    margin: 24px 0 0 -5px;
    border-left: 4px solid transparent;
    border-right: 4px solid transparent;
    border-top: 5px solid #1c2f4d;
}

.axis-drop {
    width: 1519px;
    padding: 14px 0 0 8px;
    background-color: #f7f8fc;
}

.pill {
    width: 94px;
    height: 33px;
    padding-left: 12px;
    line-height: 31px;
    background-color: #b0c6e8;
    border-radius: 8px 0 8px 0;
}

.axis-end {
    width: 53px;
    margin-left: 1px;
    padding-left: 17px;
    display: flex;
    align-items: center;
    background-color: #f7f8fc;
}

.preview-row {
    height: 39px;
    margin-top: -13px;
    padding: 21px 0 0 1627px;
    display: flex;
    align-items: center;
    gap: 10px;
    white-space: nowrap;
}

.check-empty {
    width: 23px;
    height: 23px;
    flex-shrink: 0;
    border: 1.500px solid #3a4a62;
    border-radius: 4px;
}

.chart-card {
    width: 1760px;
    height: 1005px;
    margin-top: 14px;
    padding: 16px 0 0 25px;
    border: 2px solid #e8eaf0;
}

.card-title {
    line-height: 30px;
}

.plot-row {
    margin-top: 25px;
    margin-left: -25px;
    display: flex;
}

.y-label {
    width: 200px;
    margin-top: -3px;
    padding-right: 8px;
    align-self: center;
    text-align: right;
    font-size: 18px;
    color: #555;
    white-space: nowrap;
}

.plot {
    width: 1515px;
    height: 830px;
    display: flex;
    align-items: center;
    justify-content: center;
    border-left: 2px solid #ccc;
    border-bottom: 2px solid #ccc;
}

.plot svg {
    margin-right: 3px;
}

.x-label {
    margin: 9px 0 0 175px;
    width: 1515px;
    line-height: 24px;
    text-align: center;
    font-size: 18px;
    color: #555;
}

.all-data {
    margin-top: 30px;
    display: flex;
    align-items: center;
}

.check-on {
    width: 23px;
    height: 23px;
    margin-right: 11px;
    background-color: #2f62dd;
    border-radius: 4px;
}

.all-data span {
    margin-right: 10px;
    line-height: 28px;
}

/* sheet tabs */
.sheetbar {
    height: 66px;
    flex-shrink: 0;
    display: flex;
    background-color: #edf0f6;
    border-top: 3px solid #d0d3dc;
    border-bottom-left-radius: 6px;
}

.sheet-data {
    width: 226px;
    height: 48px;
    padding-left: 73px;
    display: flex;
    align-items: center;
    gap: 17px;
    font-weight: bold;
}

.sheet-tab {
    width: 358px;
    height: 50px;
    margin-top: -2px;
    padding: 0 0 2px 13px;
    display: flex;
    align-items: center;
    gap: 10px;
    font-weight: bold;
    background-color: #fff;
    border: 1px solid #d3d6df;
    border-radius: 0 0 9px 9px;
}

.sheet-add {
    margin: 12px 0 0 35px;
    display: flex;
    gap: 28px;
}

.sheet-end {
    margin-left: auto;
    padding: 13px 4px 0 0;
    display: flex;
    gap: 24px;
}

.sheet-sep {
    width: 1px;
    height: 21px;
    margin-top: 1px;
    background-color: #d3d6df;
}

/* windows taskbar */
.taskbar {
    height: 76px;
    flex-shrink: 0;
    padding: 17px 7px 0 19px;
    display: flex;
    align-items: flex-start;
    background-color: #232323;
    background-image: linear-gradient(90deg, #202020, #2a2a2a 60%, #262626);
    border-top: 7px solid #3a3a3a;
}

.win-logo {
    margin-top: 1px;
}

.win-search {
    width: 150px;
    height: 48px;
    margin: -5px 0 0 22px;
    padding: 0 0 2px 44px;
    display: flex;
    align-items: center;
    gap: 6px;
    background-color: #333;
    border-radius: 24px;
    color: #fff;
    font-size: 19px;
}

.apps {
    margin-left: 3px;
    display: flex;
}

.app {
    width: 66px;
    display: flex;
    flex-direction: column;
    align-items: center;
    gap: 4px;
}

.app::after {
    content: "";
    width: 9px;
    height: 8px;
    background-color: #8a8a8a;
    border-radius: 4px;
}

.app.no-dot::after {
    background-color: transparent;
}

.tray {
    margin-left: auto;
    margin-top: -8px;
    display: flex;
    align-items: center;
}

.tray-icon {
    width: 48.140px;
    display: flex;
    justify-content: center;
}

.tray-text {
    color: #fff;
    font-size: 24px;
    line-height: 26px;
}

.tray-icon.sogou {
    width: 48px;
    margin-left: 9px;
}

.sys-icons {
    width: 108px;
    margin-left: 14px;
    padding-left: 5px;
    display: flex;
    gap: 12px;
    align-items: center;
}

.clock {
    width: 95px;
    margin-left: 5px;
    text-align: right;
    color: #fff;
    font-family: "Open Sans", "Liberation Sans", sans-serif;
    font-size: 18px;
    line-height: 24px;
}
```
